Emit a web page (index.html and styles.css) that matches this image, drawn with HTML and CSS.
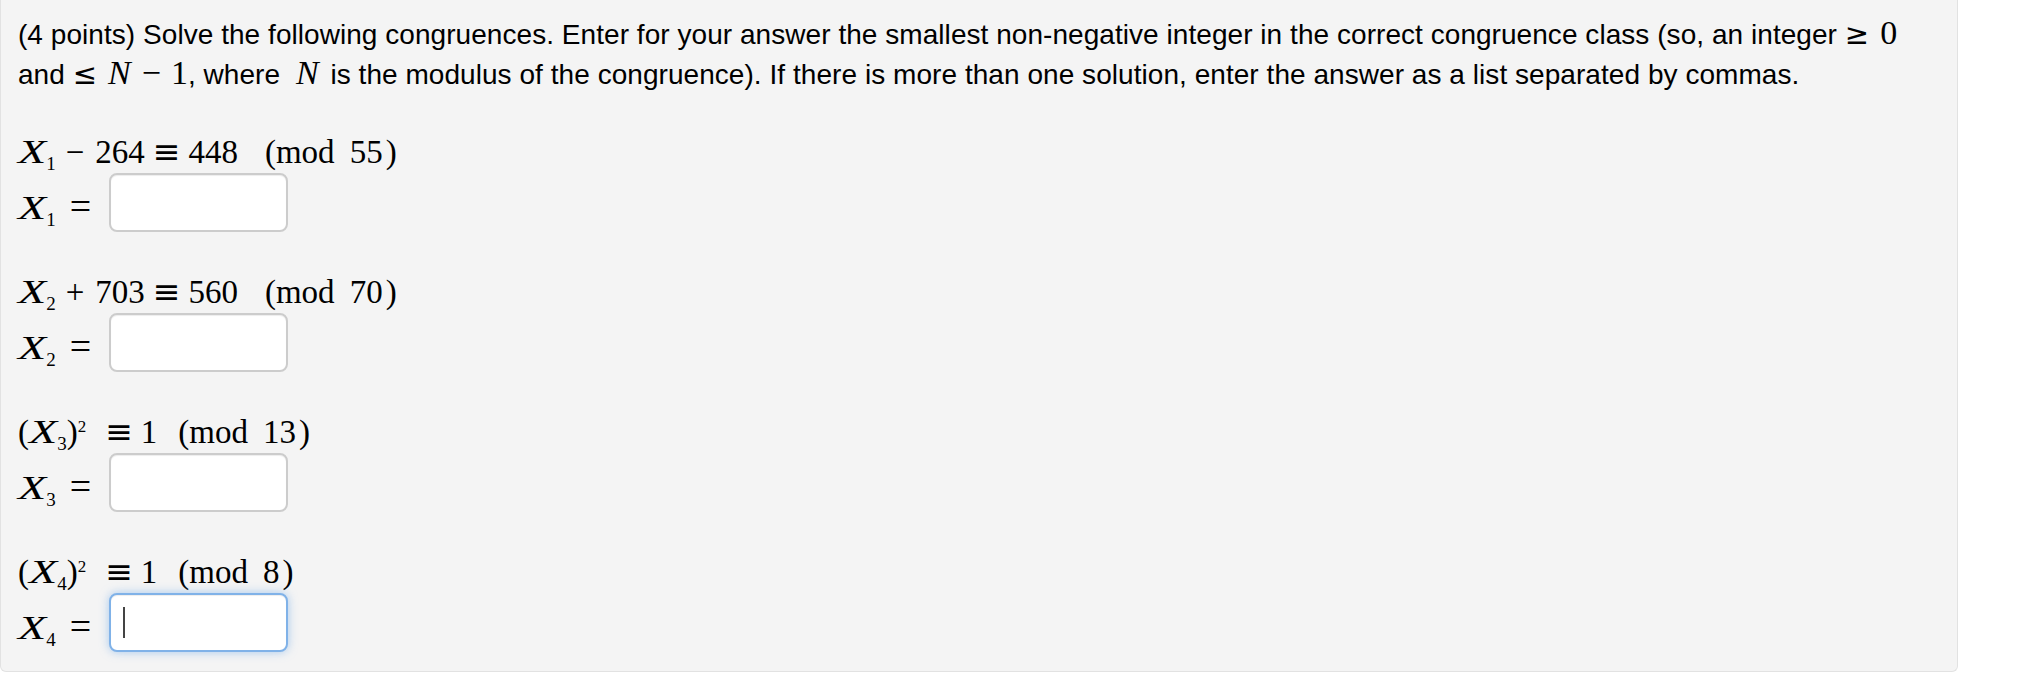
FILE: index.html
```html
<!DOCTYPE html>
<html lang="en">
<head>
<meta charset="utf-8">
<title>Congruences</title>
<link rel="stylesheet" href="styles.css">
</head>
<body>
<div class="problem">
  <p class="prompt">(4 points) Solve the following congruences. Enter for your answer the smallest non-negative integer in the correct congruence class (so, an integer <span class="m"><span class="ge">≥</span>0</span><br>and <span class="m"><span class="ge">≤</span><span class="mi">N</span><span class="bin">−</span>1</span>, where <span class="m solo"><span class="mi">N</span></span> is the modulus of the congruence). If there is more than one solution, enter the answer as a list separated by commas.</p>

  <div class="group">
    <div class="eq"><span class="x">X</span><sub>1</sub><span class="bin">−</span>264<span class="rel">≡</span>448<span class="mod">(mod<span class="mn">55</span><span class="rp">)</span></span></div>
    <div class="ans"><span class="lhs"><span class="x">X</span><sub>1</sub><span class="eqs">=</span></span><span class="field"><input type="text" class="box"></span></div>
  </div>

  <div class="group">
    <div class="eq"><span class="x">X</span><sub>2</sub><span class="bin">+</span>703<span class="rel">≡</span>560<span class="mod">(mod<span class="mn">70</span><span class="rp">)</span></span></div>
    <div class="ans"><span class="lhs"><span class="x">X</span><sub>2</sub><span class="eqs">=</span></span><span class="field"><input type="text" class="box"></span></div>
  </div>

  <div class="group">
    <div class="eq">(<span class="x">X</span><sub>3</sub>)<sup>2</sup><span class="rel">≡</span>1<span class="mod tight">(mod<span class="mn">13</span><span class="rp">)</span></span></div>
    <div class="ans"><span class="lhs"><span class="x">X</span><sub>3</sub><span class="eqs">=</span></span><span class="field"><input type="text" class="box"></span></div>
  </div>

  <div class="group">
    <div class="eq">(<span class="x">X</span><sub>4</sub>)<sup>2</sup><span class="rel">≡</span>1<span class="mod tight">(mod<span class="mn">8</span><span class="rp">)</span></span></div>
    <div class="ans"><span class="lhs"><span class="x">X</span><sub>4</sub><span class="eqs">=</span></span><span class="field focused"><input type="text" class="box"></span></div>
  </div>
</div>
</body>
</html>
```

FILE: styles.css
```css
* { box-sizing: border-box; }

html, body {
  margin: 0;
  padding: 0;
  background: #ffffff;
}

.problem {
  width: 1958px;
  background: #f4f4f4;
  border: 1px solid #e2e2e2;
  border-top: none;
  border-radius: 0 0 6px 6px;
  padding: 15px 17px 19px 17px;
  color: #000;
}

.prompt {
  margin: 0 0 42px 0;
  font-family: "Liberation Sans", Arial, sans-serif;
  font-size: 28px;
  letter-spacing: 0.05px;
  line-height: 40px;
}

.m {
  font-family: "Liberation Serif", "Times New Roman", serif;
  font-size: 34px;
  letter-spacing: 0;
  line-height: 1;
}

.solo {
  margin: 0 4px 0 8px;
}

.ge {
  font-family: "DejaVu Sans", sans-serif;
  font-size: 29px;
  margin-right: 11px;
}

.mi {
  font-style: italic;
}

.prompt .bin {
  margin: 0 10px 0 11px;
}

.group {
  display: flex;
  flex-direction: column;
  gap: 6px;
  margin-bottom: 45px;
}

.group:last-child {
  margin-bottom: 0;
}

.eq, .lhs {
  font-family: "Liberation Serif", "Times New Roman", serif;
  font-size: 33px;
  line-height: 30px;
  height: 30px;
  white-space: nowrap;
}

.x {
  display: inline-block;
  font-style: italic;
  transform: scaleX(1.4);
  transform-origin: left center;
  margin-right: 8px;
}

sub, sup {
  line-height: 0;
  position: relative;
  vertical-align: baseline;
}

sub { font-size: 19px; top: 7px; }
sup { font-size: 17px; top: -11px; margin-left: 0; margin-right: 11px; }

.bin {
  margin: 0 11px 0 10px;
}

.rel {
  font-family: "DejaVu Sans", sans-serif;
  font-size: 33px;
  margin: 0 8px;
}

.eqs {
  font-size: 38px;
  margin-left: 14px;
}

.mod {
  margin-left: 27px;
}

.mod.tight {
  margin-left: 21px;
}

.mn {
  margin-left: 15px;
}

.rp {
  margin-left: 3px;
}

.ans {
  display: flex;
  align-items: center;
  height: 59px;
}

.lhs {
  display: inline-flex;
  align-items: baseline;
  width: 91px;
  margin-top: 6px;
}

.field {
  position: relative;
  display: inline-block;
}

.box {
  display: block;
  width: 179px;
  height: 59px;
  margin: 0;
  padding: 0 12px;
  background: #fff;
  border: 2px solid #cccccc;
  border-radius: 8px;
  box-shadow: inset 0 1px 1px rgba(0, 0, 0, 0.075);
  font-family: "Liberation Sans", Arial, sans-serif;
  font-size: 24px;
  outline: none;
}

.focused .box {
  border-color: #80b2e8;
  box-shadow: inset 0 1px 1px rgba(0, 0, 0, 0.075), 0 0 10px rgba(102, 165, 233, 0.55);
}

.focused::after {
  content: "";
  position: absolute;
  left: 14px;
  top: 14px;
  width: 2px;
  height: 31px;
  background: #444;
}
```
